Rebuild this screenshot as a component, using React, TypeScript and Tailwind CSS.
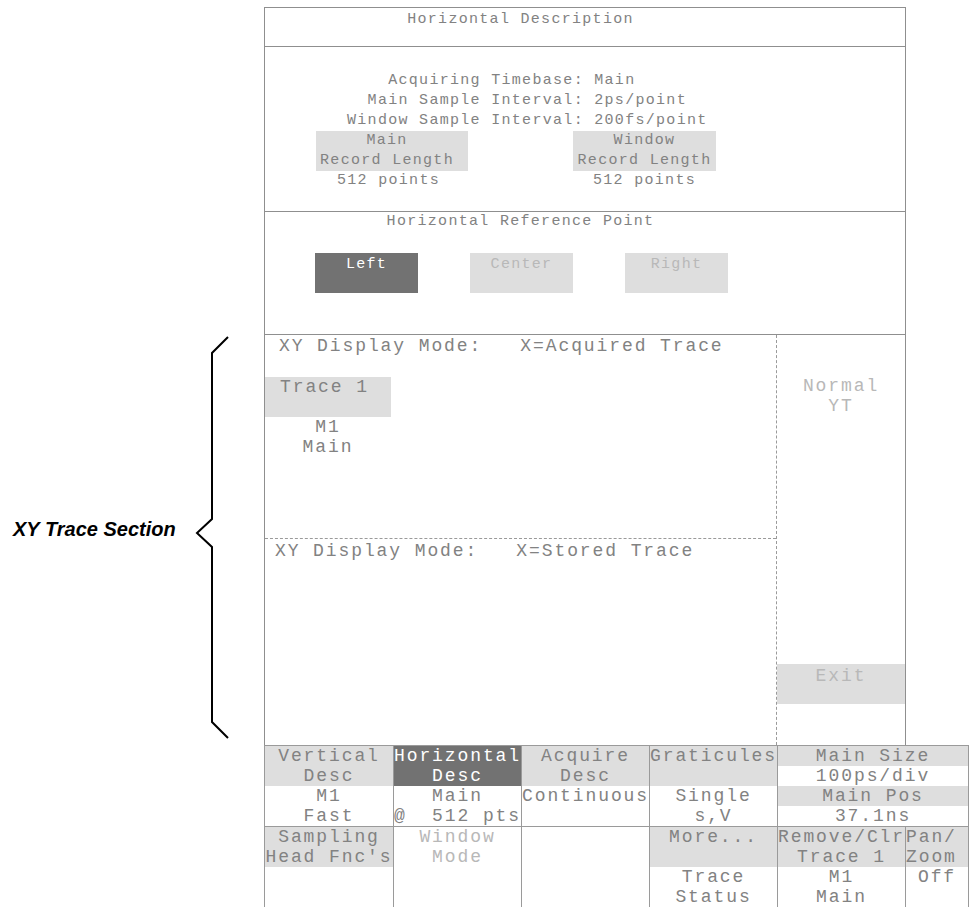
import React from 'react';

// shared text styles (the scope screen uses a thin stroke font, two sizes)
const small = "font-['Liberation_Mono',monospace] text-[15px] leading-[20px] tracking-[1.3px] whitespace-pre";
const big = "font-['Liberation_Mono',monospace] text-[18px] leading-[20px] tracking-[1.9px] whitespace-pre";
const ink = "text-[#828282]";
const dim = "text-[#b8b8b8]";
const light = "bg-[#dedede]";
const dark = "bg-[#727272] text-white";

type Ln = { t: string; cls?: string };

const Lines: React.FC<{ lines: Ln[]; className?: string }> = ({ lines, className = '' }) => (
  <div className={`flex flex-col ${className}`}>
    {lines.map((l, i) => (
      <div key={i} className={`h-[20px] ${l.cls ?? ''}`}>
        {l.t}
      </div>
    ))}
  </div>
);

const Brace = () => (
  <svg width="50" height="415" viewBox="0 0 50 415" fill="none">
    <polyline
      points="38,7 22,23 22,189 7,203 22,217 22,392 38,408"
      stroke="#000"
      strokeWidth="2"
    />
  </svg>
);

const MenuCell: React.FC<{ children?: React.ReactNode; className?: string }> = ({ children, className = '' }) => (
  <div className={`border-r border-[#9a9a9a] text-center ${big} ${ink} ${className}`}>{children}</div>
);

export default function App() {
  return (
    <div className="w-[972px] h-[907px] bg-white flex overflow-hidden">
      {/* annotation gutter */}
      <div className="w-[264px] shrink-0 pt-[330px] flex">
        <div className="w-[190px] pl-[13px] pt-[187px]">
          <div className="font-['Liberation_Sans',Arial,sans-serif] font-bold italic text-[20px] leading-[24px] text-black whitespace-nowrap">
            XY Trace Section
          </div>
        </div>
        <Brace />
      </div>

      <div className="flex flex-col pt-[7px]">
        {/* description panel */}
        <div className="w-[642px] h-[738px] border border-b-0 border-[#8f8f8f] flex flex-col">
          <div className="h-[39px] border-b border-[#8f8f8f] pt-[2px]">
            <div className={`w-[511px] text-center ${small} ${ink}`}>Horizontal Description</div>
          </div>

          <div className="h-[165px] border-b border-[#8f8f8f] pt-[24px]">
            <Lines
              className={`pl-[82px] ${small} ${ink}`}
              lines={[
                { t: '    Acquiring Timebase: Main' },
                { t: '  Main Sample Interval: 2ps/point' },
                { t: 'Window Sample Interval: 200fs/point' },
              ]}
            />
            <div className={`flex pl-[51px] ${small} ${ink}`}>
              <div className="w-[152px]">
                <Lines className={`${light} text-center pr-[10px]`} lines={[{ t: 'Main' }, { t: 'Record Length' }]} />
                <div className="h-[20px] pl-[21px]">512 points</div>
              </div>
              <div className="w-[143px] ml-[105px]">
                <Lines className={`${light} text-center`} lines={[{ t: 'Window' }, { t: 'Record Length' }]} />
                <div className="h-[20px] pl-[20px]">512 points</div>
              </div>
            </div>
          </div>

          <div className="h-[123px] border-b border-[#8f8f8f]">
            <div className={`w-[511px] text-center ${small} ${ink}`}>Horizontal Reference Point</div>
            <div className={`flex gap-[52px] pl-[50px] mt-[21px] ${small}`}>
              <div className={`w-[103px] h-[40px] pt-[2px] text-center ${dark}`}>Left</div>
              <div className={`w-[103px] h-[40px] pt-[2px] text-center ${light} ${dim}`}>Center</div>
              <div className={`w-[103px] h-[40px] pt-[2px] text-center ${light} ${dim}`}>Right</div>
            </div>
          </div>

          {/* XY section */}
          <div className="h-[410px] flex">
            <div className="w-[512px] border-r border-dashed border-[#9a9a9a] flex flex-col">
              <div className={`h-[204px] border-b border-dashed border-[#9a9a9a] pt-[1px] ${big} ${ink}`}>
                <div className="h-[20px] pl-[14px]">XY Display Mode:   X=Acquired Trace</div>
                <div className={`w-[126px] h-[40px] mt-[21px] pl-[15px] ${light}`}>Trace 1</div>
                <Lines className="w-[126px] text-center" lines={[{ t: 'M1' }, { t: 'Main' }]} />
              </div>
              <div className={`flex-1 pt-[2px] ${big} ${ink}`}>
                <div className="h-[20px] pl-[10px]">XY Display Mode:   X=Stored Trace</div>
              </div>
            </div>
            <div className={`flex-1 flex flex-col pt-[41px] pb-[41px] text-center ${big} ${dim}`}>
              <Lines lines={[{ t: 'Normal' }, { t: 'YT' }]} />
              <div className={`mt-auto h-[40px] pt-[2px] ${light}`}>Exit</div>
            </div>
          </div>
        </div>

        {/* softkey menu */}
        <div className="w-[705px] border-l border-t border-[#9a9a9a] grid grid-cols-[129px_128px_128px_128px_128px_63px]">
          <MenuCell className="h-[81px] border-b">
            <Lines className={light} lines={[{ t: 'Vertical' }, { t: 'Desc' }]} />
            <Lines lines={[{ t: 'M1' }, { t: 'Fast' }]} />
          </MenuCell>
          <MenuCell className="h-[81px] border-b">
            <Lines className={dark} lines={[{ t: 'Horizontal' }, { t: 'Desc' }]} />
            <Lines lines={[{ t: 'Main' }, { t: '@  512 pts', cls: 'text-left' }]} />
          </MenuCell>
          <MenuCell className="h-[81px] border-b">
            <Lines className={light} lines={[{ t: 'Acquire' }, { t: 'Desc' }]} />
            <Lines lines={[{ t: 'Continuous' }]} />
          </MenuCell>
          <MenuCell className="h-[81px] border-b">
            <Lines className={light} lines={[{ t: 'Graticules' }, { t: '' }]} />
            <Lines lines={[{ t: 'Single' }, { t: 's,V' }]} />
          </MenuCell>
          <MenuCell className="h-[81px] border-b col-span-2">
            <Lines
              lines={[
                { t: 'Main Size', cls: light },
                { t: '100ps/div' },
                { t: 'Main Pos', cls: light },
                { t: '37.1ns' },
              ]}
            />
          </MenuCell>

          <MenuCell className="h-[80px]">
            <Lines className={light} lines={[{ t: 'Sampling' }, { t: "Head Fnc's" }]} />
          </MenuCell>
          <MenuCell className={`h-[80px] ${dim}`}>
            <Lines lines={[{ t: 'Window' }, { t: 'Mode' }]} />
          </MenuCell>
          <MenuCell className="h-[80px]" />
          <MenuCell className="h-[80px]">
            <Lines className={light} lines={[{ t: 'More...' }, { t: '' }]} />
            <Lines lines={[{ t: 'Trace' }, { t: 'Status' }]} />
          </MenuCell>
          <MenuCell className="h-[80px]">
            <Lines className={light} lines={[{ t: 'Remove/Clr' }, { t: 'Trace 1' }]} />
            <Lines lines={[{ t: 'M1' }, { t: 'Main' }]} />
          </MenuCell>
          <MenuCell className="h-[80px]">
            <Lines className={`${light} text-left`} lines={[{ t: 'Pan/' }, { t: 'Zoom' }]} />
            <Lines lines={[{ t: 'Off' }]} />
          </MenuCell>
        </div>
      </div>
    </div>
  );
}
